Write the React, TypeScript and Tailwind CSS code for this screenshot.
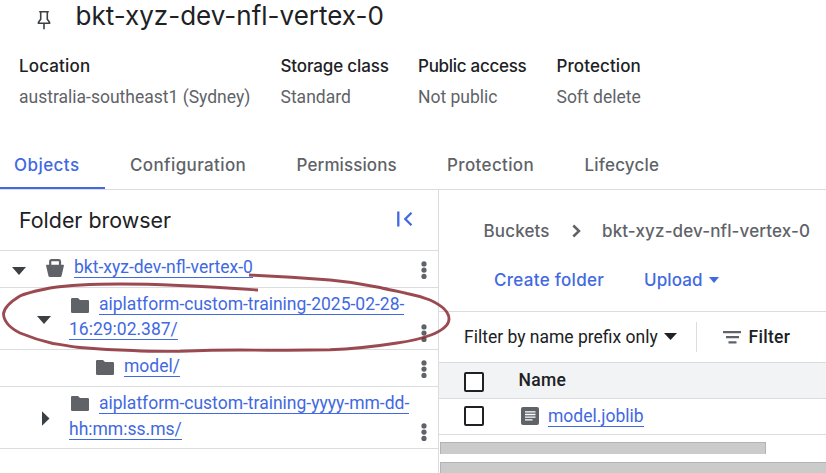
import type { ReactNode } from "react";

const details = [
  { label: "Location", value: "australia-southeast1 (Sydney)", cls: "w-[261.5px]", track: "tracking-[0.15px]" },
  { label: "Storage class", value: "Standard", cls: "w-[137.5px]", track: "tracking-[-0.15px]" },
  { label: "Public access", value: "Not public", cls: "w-[138.5px]", track: "tracking-[-0.28px]" },
  { label: "Protection", value: "Soft delete", cls: "w-[120px]", track: "tracking-[0.1px]" },
];

const tabs = [
  { label: "Configuration", cls: "ml-[25px] w-[166.5px] tracking-[0.38px]" },
  { label: "Permissions", cls: "w-[150.5px] tracking-[0.1px]" },
  { label: "Protection", cls: "w-[137.5px] tracking-[0.37px]" },
  { label: "Lifecycle", cls: "tracking-[0.2px]" },
];

function Link({ children }: { children: ReactNode }) {
  return <span className="border-b border-[#4169e1] text-[#4169e1]">{children}</span>;
}

function Folder({ className }: { className: string }) {
  return (
    <svg className={`inline-block h-[16px] w-[18px] ${className}`} viewBox="0 0 18 16" fill="#5f6368">
      <path d="M1.200 0H7l2 2h7.800Q18 2 18 3.200v10.600q0 1.200-1.200 1.200H1.200Q0 15 0 13.800V1.200Q0 0 1.200 0z" />
    </svg>
  );
}

function Dots({ className }: { className: string }) {
  return (
    <svg className={`ml-auto mr-[11.5px] h-[18px] w-[6px] shrink-0 ${className}`} viewBox="0 0 6 18" fill="#5f6368">
      <circle cx="3" cy="2.900" r="2.600" />
      <circle cx="3" cy="9.100" r="2.600" />
      <circle cx="3" cy="15.400" r="2.600" />
    </svg>
  );
}

function Down({ className }: { className: string }) {
  return (
    <svg className={`shrink-0 ${className}`} viewBox="0 0 14 8" preserveAspectRatio="none" fill="currentColor">
      <path d="M0 0h14L7 8z" />
    </svg>
  );
}

function Checkbox() {
  return <span className="h-5 w-5 shrink-0 rounded-[2px] border-2 border-[#202124] bg-white" />;
}

function Header() {
  return (
    <header className="h-[146px]">
      <div className="flex h-[50px] items-start">
        <svg className="ml-[37px] mt-[10px] h-5 w-[15px]" viewBox="0 0 15 20" fill="none" stroke="#3c4043" strokeWidth="1.600">
          <path d="M2.200 1.800h9.600M3.700 1.800v7.500L1.500 12.200v1.100h11v-1.100L10.300 9.300V1.800M7 13.300v6" />
        </svg>
        <h1 className="ml-[23.5px] text-[26px] leading-8 text-[#202124]">bkt-xyz-dev-nfl-vertex-0</h1>
      </div>
      <div className="flex pl-[19px] pt-1">
        {details.map((d) => (
          <div key={d.label} className={`shrink-0 whitespace-nowrap ${d.cls}`}>
            <div className={`text-[17px] font-medium leading-6 text-[#202124] ${d.track}`}>{d.label}</div>
            <div className="mt-[7px] font-['Roboto',sans-serif] text-[17.5px] leading-6 text-[#5f6368]">{d.value}</div>
          </div>
        ))}
      </div>
    </header>
  );
}

function FolderBrowser() {
  return (
    <section className="relative w-[439px] shrink-0 border-r border-[#dadce0] font-['Roboto',sans-serif] text-[17.5px] text-[#3c4043]">
      <div className="flex h-[61px] items-start border-b border-[#dadce0] pl-[19px]">
        <h2 className="mt-[14px] font-['Inter',sans-serif] text-[21.4px] leading-8 text-[#202124]">Folder browser</h2>
        <svg className="ml-auto mr-[25px] mt-5 h-[18px] w-[17px]" viewBox="0 0 17 18" fill="none" stroke="#4169e1" strokeWidth="2.300">
          <path d="M2.300 1.500v15M15.500 2.800L9.300 9l6.200 6.200" />
        </svg>
      </div>

      <div className="flex h-[37px] items-start border-b border-[#dadce0]">
        <Down className="ml-3 mt-4 h-2 w-[14px]" />
        <svg className="ml-5 mt-2 h-[18px] w-[18px]" viewBox="0 0 18 18">
          <path d="M4.200 7V2.500Q4.200 1.200 5.500 1.200h7.200Q14 1.200 14 2.500V7" fill="none" stroke="#5f6368" strokeWidth="2.200" />
          <path d="M0.800 5.800h16.400q0.900 0 0.700 0.900l-2.300 10q-0.300 1.200-1.400 1.200H3.800q-1.100 0-1.400-1.200L0.100 6.700q-0.200-0.900 0.700-0.900z" fill="#5f6368" />
        </svg>
        <div className="ml-[10px] mt-1 leading-6"><Link>bkt-xyz-dev-nfl-vertex-0</Link></div>
        <Dots className="mt-[10px]" />
      </div>

      <div className="flex h-[62px] items-start border-b border-[#dadce0]">
        <Down className="ml-[37px] mt-7 h-2 w-[14px]" />
        <div className="ml-[18px] mt-1 whitespace-nowrap leading-[25px]">
          <Folder className="ml-[2px] mr-[10px] mt-[2px]" />
          <Link>aiplatform-custom-training-2025-02-28-</Link>
          <br />
          <Link>16:29:02.387/</Link>
        </div>
        <Dots className="mt-9" />
      </div>

      <div className="flex h-[37px] items-start border-b border-[#dadce0]">
        <Folder className="ml-24 mt-[10px]" />
        <div className="ml-[10px] mt-1 leading-6"><Link>model/</Link></div>
        <Dots className="mt-[10px]" />
      </div>

      <div className="flex h-[62px] items-start border-b border-[#dadce0]">
        <svg className="ml-[42px] mt-6 h-[15px] w-2" viewBox="0 0 8 15" fill="currentColor">
          <path d="M0 0.300v14.400L7.500 7.500z" />
        </svg>
        <div className="ml-[19px] mt-[3px] whitespace-nowrap leading-[26px]">
          <Folder className="ml-[2px] mr-[10px]" />
          <Link>aiplatform-custom-training-yyyy-mm-dd-</Link>
          <br />
          <Link>hh:mm:ss.ms/</Link>
        </div>
        <Dots className="mt-9" />
      </div>

      <svg className="pointer-events-none absolute left-0 top-[80px] z-10 h-[90px] w-[456px]" viewBox="0 270 456 90" fill="none" stroke="#8b2c36" strokeWidth="2.900" strokeOpacity="0.86">
        <path d="M258 290C200 286 160 284 120 284C90 284 70 285 50 288C35 291 26 293 20 296C10 302 4 308 3.500 314C4 322 10 328 20 333C32 338 42 341 53 343.500C65 345 72 347 80 347.500C98 349 115 350 133 350.500C150 351.500 165 351.500 180 351.300C200 350.500 220 350 240 350C270 350.500 300 350 330 349.800C355 349 378 346 397 343C412 341 423 338 431 335C441 331 449 326 449 319C449 312 441 305 430 300C422 297 415 295 407 293.500C397 291 390 290 380 287.500C364 284 348 281.500 330 280C300 277.500 275 276 249 275" />
      </svg>
    </section>
  );
}

function Objects() {
  return (
    <section className="min-w-0 grow font-['Roboto',sans-serif] text-[17.5px] text-[#202124]">
      <div className="h-[122px] whitespace-nowrap border-b border-[#dadce0] font-['Inter',sans-serif] text-[17px] font-medium leading-6">
        <div className="flex pl-[44.5px] pt-[29px] text-[#5f6368]">
          <span className="w-[88.500px] tracking-[0.15px]">Buckets</span>
          <svg className="mr-[21px] mt-[5px] h-[14px] w-[9px]" viewBox="0 0 9 14" fill="none" stroke="currentColor" strokeWidth="2.500">
            <path d="M1.300 1.500L7 7l-5.700 5.500" />
          </svg>
          <span className="tracking-[0.13px]">bkt-xyz-dev-nfl-vertex-0</span>
        </div>
        <div className="flex pl-[55px] pt-[25px] text-[#4169e1]">
          <span className="w-[150px] tracking-[0.3px]">Create folder</span>
          <span className="w-[65px] tracking-[0.1px]">Upload</span>
          <Down className="mt-[9px] h-[6px] w-[10px]" />
        </div>
      </div>

      <div className="flex h-[51px] items-start border-b border-[#dadce0] pl-[25px] leading-6">
        <span className="mt-[13px] w-[200px] whitespace-nowrap">Filter by name prefix only</span>
        <Down className="mt-[21px] h-[7px] w-[13px]" />
        <span className="ml-[19px] mt-[10px] h-[30px] w-px bg-[#dadce0]" />
        <svg className="ml-[26px] mt-[19px] h-[13px] w-[18px]" viewBox="0 0 18 13" fill="#5f6368">
          <path d="M0 0h18v2.200H0zM3 5h13v2.200H3zM5.500 10.200h8v2.300h-8z" />
        </svg>
        <span className="ml-[7.500px] mt-[13px] font-medium tracking-[0.3px]">Filter</span>
      </div>

      <div className="flex h-9 items-start border-b border-[#dadce0] bg-[#f1f3f4] pl-[25px] pt-[9px]">
        <Checkbox />
        <span className="-mt-[4px] ml-[34.500px] font-medium leading-6 tracking-[0.3px]">Name</span>
      </div>
      <div className="flex h-9 items-start border-b border-[#dadce0] pl-[25px]">
        <span className="mt-[7px] flex"><Checkbox /></span>
        <svg className="ml-[37px] mt-2 h-[18px] w-[18px]" viewBox="0 0 18 18">
          <rect width="18" height="18" rx="2" fill="#5f6368" />
          <path d="M4 4.800h10.500M4 7.500h10.500M4 10.200h10.500M4 12.900h7.500" stroke="#fff" strokeWidth="1.300" />
        </svg>
        <div className="ml-[9px] mt-[5px] leading-6"><Link>model.joblib</Link></div>
      </div>

      <div className="ml-px mt-[7px] h-3 w-[326px] border-l border-r border-t border-[#b3b3b3] bg-[#cbcbcb]" />
      <div className="ml-px mt-2 h-[11px] border-l border-t border-[#b3b3b3] bg-[#cbcbcb]" />
    </section>
  );
}

export default function App() {
  return (
    <div className="h-[473px] w-[826px] overflow-hidden bg-white font-['Inter',sans-serif]">
      <Header />
      <nav className="flex h-11 items-start border-b border-[#dadce0] text-[17px] font-medium leading-6 text-[#5f6368]">
        <div className="h-[43px] w-[105px] border-b-2 border-[#4169e1] pl-[14px] pt-[7px] tracking-[0.45px] text-[#4169e1]">Objects</div>
        {tabs.map((t) => (
          <div key={t.label} className={`pt-[7px] ${t.cls}`}>{t.label}</div>
        ))}
      </nav>
      <main className="flex h-[283px]">
        <FolderBrowser />
        <Objects />
      </main>
    </div>
  );
}
